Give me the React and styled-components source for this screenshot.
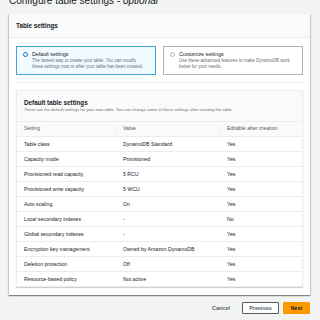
import React from "react";
import styled, { createGlobalStyle } from "styled-components";

const GlobalStyle = createGlobalStyle`
  html, body {
    margin: 0;
    padding: 0;
    background: #f2f3f3;
    font-family: "Liberation Sans", Arial, sans-serif;
    color: #16191f;
    overflow: hidden;
  }
`;

const Page = styled.div`
  width: 320px;
  height: 320px;
  padding: 0 10px 0 9px;
  box-sizing: border-box;
  overflow: hidden;
`;

const Title = styled.h1`
  margin: -6px 0 6px;
  font-size: 10px;
  line-height: 14px;
  font-weight: 400;
  color: #16191f;
  em {
    font-style: italic;
  }
`;

const Card = styled.section`
  background: #fff;
  box-shadow: 0 1px 1px rgba(0, 28, 36, 0.3), 1px 1px 1px rgba(0, 28, 36, 0.15),
    -1px 1px 1px rgba(0, 28, 36, 0.15);
`;

const CardHeader = styled.div`
  height: 24px;
  display: flex;
  align-items: center;
  padding: 0 7px;
  background: #fafafa;
  border-bottom: 1px solid #eaeded;
  box-sizing: border-box;
  font-size: 6.3px;
  font-weight: 700;
`;

const CardBody = styled.div`
  padding: 8px 7px;
`;

const Tiles = styled.div`
  display: grid;
  grid-template-columns: 1fr 1fr;
  gap: 7px;
`;

const Tile = styled.div`
  height: 29px;
  box-sizing: border-box;
  border: 1px solid ${(p) => (p.$selected ? "#44a4dc" : "#aab7b8")};
  background: ${(p) => (p.$selected ? "#f1faff" : "#fff")};
  display: flex;
  gap: 4px;
  padding: 4px 6px 0 6px;
`;

const Radio = styled.span`
  width: 5px;
  height: 5px;
  margin-top: 1px;
  flex: none;
  border-radius: 50%;
  box-sizing: border-box;
  border: ${(p) => (p.$checked ? "1.6px solid #0073bb" : "1px solid #aab7b8")};
  background: #fff;
`;

const TileText = styled.div`
  display: flex;
  flex-direction: column;
`;

const TileLabel = styled.div`
  font-size: 5.3px;
  line-height: 7px;
  color: #16191f;
`;

const TileDesc = styled.div`
  font-size: 4.5px;
  line-height: 6px;
  color: #687078;
`;

const Divider = styled.hr`
  margin: 7px 0;
  border: 0;
  border-top: 1px solid #eaeded;
`;

const Inner = styled.div`
  border: 1px solid #eaeded;
  box-shadow: 0 1px 1px rgba(0, 28, 36, 0.2);
  background: #fff;
`;

const InnerHeader = styled.div`
  height: 30px;
  box-sizing: border-box;
  padding: 7px 7px 0;
  background: #fafafa;
`;

const InnerTitle = styled.div`
  font-size: 6.3px;
  line-height: 9px;
  font-weight: 700;
`;

const InnerDesc = styled.div`
  font-size: 4.2px;
  line-height: 6px;
  color: #687078;
`;

const Table = styled.table`
  width: 100%;
  border-collapse: collapse;
  font-size: 5.2px;
  table-layout: fixed;
`;

const Th = styled.th`
  line-height: 13.5px;
  padding: 0 7px;
  text-align: left;
  font-weight: 400;
  color: #545b64;
  background: #fafafa;
  border-top: 1px solid #eaeded;
  position: relative;
  & + &::before {
    content: "";
    position: absolute;
    left: 0;
    top: 4px;
    bottom: 4px;
    border-left: 1px solid #eaeded;
  }
`;

const Td = styled.td`
  line-height: 14.1px;
  padding: 0 7px;
  border-top: 1px solid #eaeded;
  color: #16191f;
`;

const Actions = styled.div`
  display: flex;
  justify-content: flex-end;
  align-items: center;
  gap: 4px;
  margin-top: 7px;
`;

const LinkButton = styled.span`
  font-size: 5.5px;
  font-weight: 700;
  color: #545b64;
  margin-right: 8px;
`;

const Button = styled.span`
  height: 12px;
  box-sizing: border-box;
  display: flex;
  align-items: center;
  justify-content: center;
  font-size: 5.3px;
  font-weight: 700;
  width: ${(p) => (p.$primary ? "27px" : "37px")};
  color: ${(p) => (p.$primary ? "#16191f" : "#545b64")};
  background: ${(p) => (p.$primary ? "#ff9900" : "#fff")};
  border: 1px solid ${(p) => (p.$primary ? "#ff9900" : "#545b64")};
  border-radius: 1px;
`;

const rows = [
  ["Table class", "DynamoDB Standard", "Yes"],
  ["Capacity mode", "Provisioned", "Yes"],
  ["Provisioned read capacity", "5 RCU", "Yes"],
  ["Provisioned write capacity", "5 WCU", "Yes"],
  ["Auto scaling", "On", "Yes"],
  ["Local secondary indexes", "-", "No"],
  ["Global secondary indexes", "-", "Yes"],
  ["Encryption key management", "Owned by Amazon DynamoDB", "Yes"],
  ["Deletion protection", "Off", "Yes"],
  ["Resource-based policy", "Not active", "Yes"],
];

export default function App() {
  return (
    <Page>
      <GlobalStyle />
      <Title>
        Configure table settings - <em>optional</em>
      </Title>
      <Card>
        <CardHeader>Table settings</CardHeader>
        <CardBody>
          <Tiles>
            <Tile $selected>
              <Radio $checked />
              <TileText>
                <TileLabel>Default settings</TileLabel>
                <TileDesc>
                  The fastest way to create your table. You can modify
                  <br />
                  these settings now or after your table has been created.
                </TileDesc>
              </TileText>
            </Tile>
            <Tile>
              <Radio />
              <TileText>
                <TileLabel>Customize settings</TileLabel>
                <TileDesc>
                  Use these advanced features to make DynamoDB work
                  <br />
                  better for your needs.
                </TileDesc>
              </TileText>
            </Tile>
          </Tiles>
          <Divider />
          <Inner>
            <InnerHeader>
              <InnerTitle>Default table settings</InnerTitle>
              <InnerDesc>
                These are the default settings for your new table. You can
                change some of these settings after creating the table.
              </InnerDesc>
            </InnerHeader>
            <Table>
              <colgroup>
                <col style={{ width: "99px" }} />
                <col style={{ width: "104px" }} />
                <col />
              </colgroup>
              <thead>
                <tr>
                  <Th>Setting</Th>
                  <Th>Value</Th>
                  <Th>Editable after creation</Th>
                </tr>
              </thead>
              <tbody>
                {rows.map(([s, v, e]) => (
                  <tr key={s}>
                    <Td>{s}</Td>
                    <Td>{v}</Td>
                    <Td>{e}</Td>
                  </tr>
                ))}
              </tbody>
            </Table>
          </Inner>
        </CardBody>
      </Card>
      <Actions>
        <LinkButton>Cancel</LinkButton>
        <Button>Previous</Button>
        <Button $primary>Next</Button>
      </Actions>
    </Page>
  );
}
